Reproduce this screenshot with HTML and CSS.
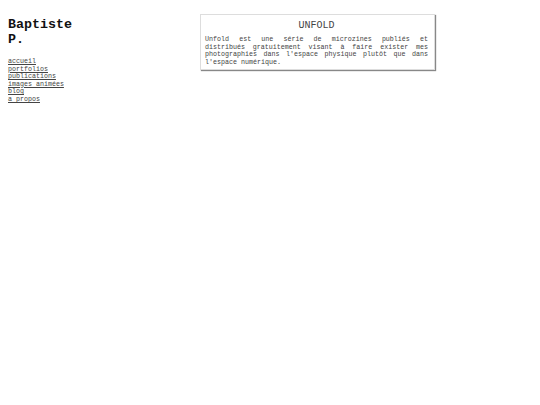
FILE: index.html
```
<!DOCTYPE html>
<html lang="fr">
<head>
<meta charset="utf-8">
<link rel="stylesheet" href="styles.css">
</head>
<body>
<div class="page">
  <nav class="side">
    <h1 class="name">Baptiste P.</h1>
    <ul class="menu">
      <li><a href="#">accueil</a></li>
      <li><a href="#">portfolios</a></li>
      <li><a href="#">publications</a></li>
      <li><a href="#">images animées</a></li>
      <li><a href="#">blog</a></li>
      <li><a href="#">a propos</a></li>
    </ul>
  </nav>
  <main class="content">
    <section class="card">
      <h2 class="card-title">UNFOLD</h2>
      <p class="card-text">Unfold est une série de microzines publiés et distribués gratuitement visant à faire exister mes photographies dans l'espace physique plutôt que dans l'espace numérique.</p>
    </section>
  </main>
</div>
</body>
</html>
```
FILE: styles.css
```
html, body {
  margin: 0;
  padding: 0;
  background: #fff;
}
body {
  font-family: "Liberation Mono", "Courier New", monospace;
  color: #333;
}
.page {
  display: flex;
  align-items: flex-start;
  padding: 14px 8px;
}
.side {
  width: 192px;
  flex: none;
}
.name {
  margin: 3px 0 0 0;
  font-size: 13.33px;
  line-height: 15px;
  font-weight: bold;
  color: #111;
  width: 70px;
}
.menu {
  list-style: none;
  margin: 11px 0 0 0;
  padding: 0;
  font-size: 6.67px;
  line-height: 7.6px;
}
.menu a {
  color: #444;
  text-decoration: underline;
}
.content {
  flex: none;
}
.card {
  width: 223px;
  padding: 4px 6px 3px 4px;
  border: 1px solid #ddd;
  box-shadow: 1px 1px 1px #888;
  background: #fff;
}
.card-title {
  margin: 0;
  text-align: center;
  font-weight: normal;
  font-size: 10px;
  line-height: 14px;
  color: #444;
}
.card-text {
  margin: 3px 0 0 0;
  font-size: 6.67px;
  line-height: 7.6px;
  text-align: justify;
  color: #444;
}
```
